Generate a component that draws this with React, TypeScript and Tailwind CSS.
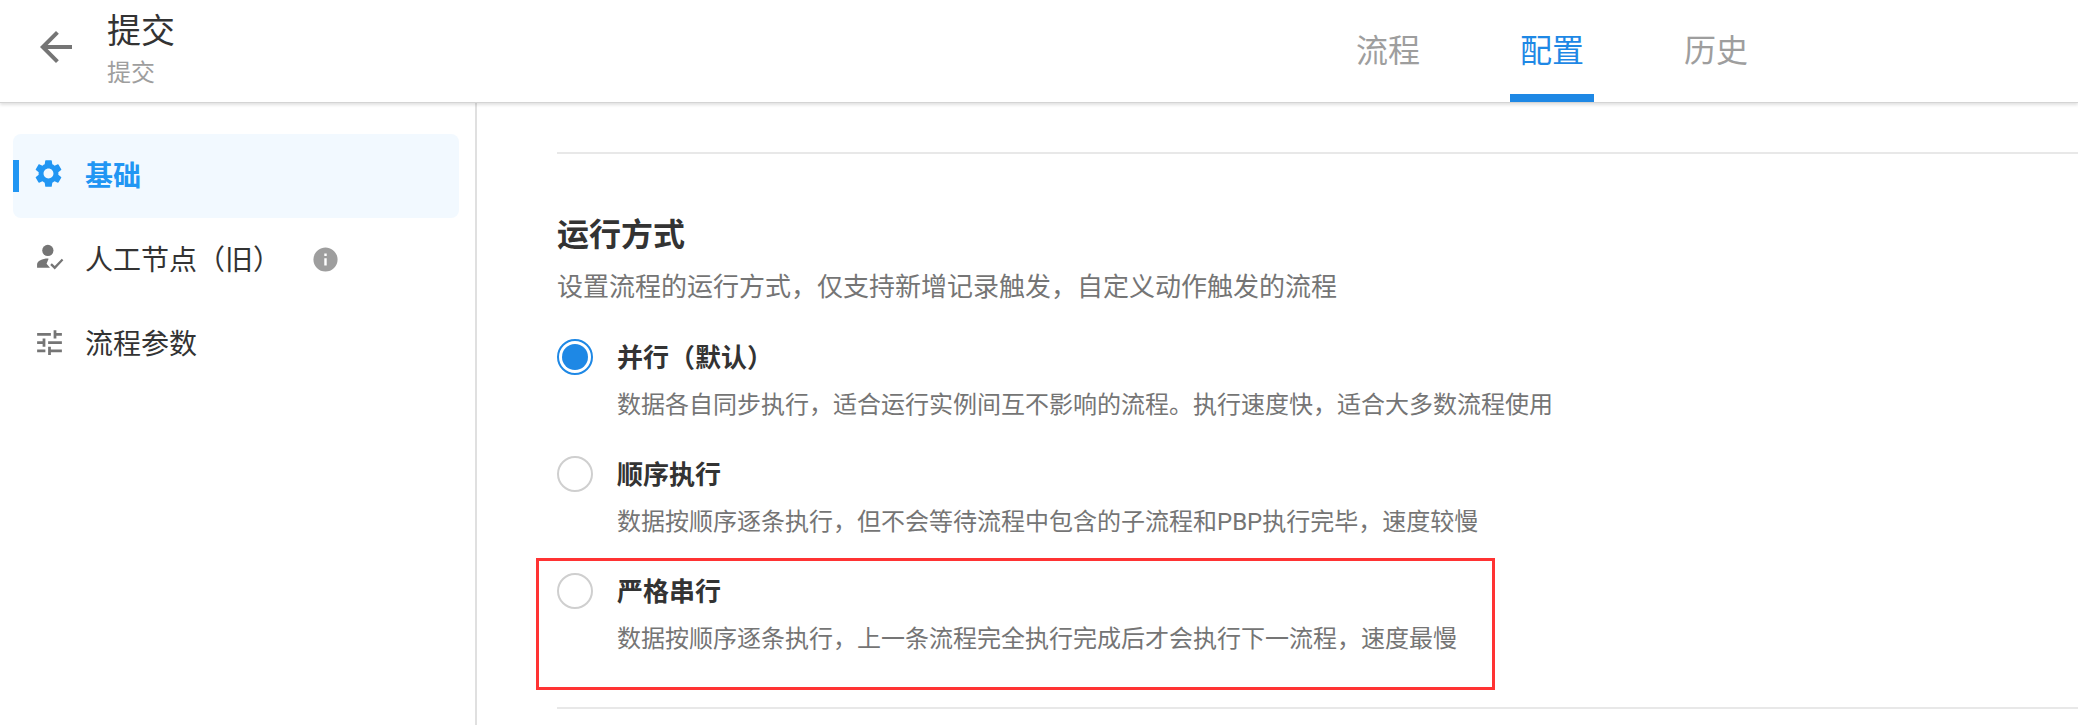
import React from 'react';
import { MdArrowBack, MdInfo, MdSettings, MdTune } from 'react-icons/md';

const font = "font-['Roboto','Noto_Sans_CJK_SC',sans-serif]";

const PersonCheck = () => (
  <svg viewBox="0 0 26 26" className="w-[28px] h-[28px]" fill="#757575">
    <circle cx="11" cy="6" r="5.2" />
    <path d="M11 13.5c-5 0-10 2.4-10 5.4V22h12l-3.2-3.6 1.9-4.8z" />
    <path d="M13.2 19.4l1.5-1.6 2.7 2.7 6.5-6.9 1.5 1.5-8 8.6z" />
  </svg>
);

const tabs = [
  { label: '流程', active: false },
  { label: '配置', active: true },
  { label: '历史', active: false },
];

const options = [
  { title: '并行（默认）', desc: '数据各自同步执行，适合运行实例间互不影响的流程。执行速度快，适合大多数流程使用', checked: true },
  { title: '顺序执行', desc: '数据按顺序逐条执行，但不会等待流程中包含的子流程和PBP执行完毕，速度较慢', checked: false },
  { title: '严格串行', desc: '数据按顺序逐条执行，上一条流程完全执行完成后才会执行下一流程，速度最慢', checked: false, marked: true },
];

const App: React.FC = () => {
  return (
    <div className={`${font} h-[725px] w-[2078px] overflow-hidden bg-white flex flex-col`}>
      <header className="h-[103px] shrink-0 flex border-b border-[#d4d4d4] shadow-[0_2px_3px_rgba(0,0,0,0.12)] relative z-10 bg-white">
        <div className="w-[107px] flex items-center pl-[32px] pb-[9px]">
          <MdArrowBack size={48} color="#757575" />
        </div>
        <div className="flex flex-col pt-[11px]">
          <span className="text-[34px] leading-[40px] text-[#333]">提交</span>
          <span className="text-[24px] leading-[34px] mt-[5px] text-[#9e9e9e]">提交</span>
        </div>
        <nav className="ml-auto mr-[320px] flex gap-20">
          {tabs.map(tab => (
            <div
              key={tab.label}
              className={`w-[84px] h-[102px] pt-[30px] text-center text-[32px] leading-[42px] border-b-[8px] ${tab.active ? 'text-[#1e88e5] border-[#1e88e5]' : 'text-[#9e9e9e] border-transparent'}`}
            >
              {tab.label}
            </div>
          ))}
        </nav>
      </header>

      <div className="flex flex-1 min-h-0">
        <aside className="w-[477px] shrink-0 border-r-2 border-[#e0e0e0] pt-[31px] pl-[13px] pr-[16px]">
          <div className="relative h-[84px] flex items-center rounded-lg bg-[#f2f9ff] text-[#2196f3] font-bold text-[28px]">
            <span className="absolute left-0 top-[26px] w-[6px] h-[32px] bg-[#2196f3]" />
            <span className="w-[72px] pl-[19px] pb-[6px]"><MdSettings size={33} color="#2196f3" /></span>
            <span className="pt-[2px]">基础</span>
          </div>
          <div className="h-[84px] flex items-center text-[#333] text-[28px]">
            <span className="w-[72px] pl-[23px] pb-[4px]"><PersonCheck /></span>
            <span className="pt-[2px]">人工节点（旧）</span>
            <span className="ml-[30px] pb-[2px]"><MdInfo size={29} color="#9e9e9e" /></span>
          </div>
          <div className="h-[84px] flex items-center text-[#333] text-[28px]">
            <span className="w-[72px] pl-[20px] pb-[4px]"><MdTune size={33} color="#757575" /></span>
            <span className="pt-[2px]">流程参数</span>
          </div>
        </aside>

        <main className="flex-1 pl-[80px] pt-[49px]">
          <div className="h-[2px] bg-[#e8e8e8]" />
          <h2 className="mt-[59px] text-[32px] leading-[44px] font-bold text-[#333]">运行方式</h2>
          <p className="mt-[12px] text-[26px] leading-[36px] text-[#757575]">设置流程的运行方式，仅支持新增记录触发，自定义动作触发的流程</p>

          <div className="mt-[34px] flex flex-col gap-[33px]">
            {options.map(opt => (
              <div key={opt.title} className="relative flex gap-[24px]">
                {opt.checked ? (
                  <span className="w-[36px] h-[36px] shrink-0 rounded-full border-2 border-[#1e88e5] flex items-center justify-center">
                    <span className="w-[26px] h-[26px] rounded-full bg-[#1e88e5]" />
                  </span>
                ) : (
                  <span className="w-[36px] h-[36px] shrink-0 rounded-full border-2 border-[#cfcfcf]" />
                )}
                <div>
                  <div className="pt-[1px] text-[26px] leading-[36px] font-bold text-[#333]">{opt.title}</div>
                  <div className="mt-[11px] text-[24px] leading-[36px] text-[#757575]">{opt.desc}</div>
                </div>
                {opt.marked && (
                  <span className="absolute left-[-21px] top-[-15px] w-[959px] h-[132px] border-[3px] border-[#f33]" />
                )}
              </div>
            ))}
          </div>

          <div className="mt-[50px] h-[2px] bg-[#e8e8e8]" />
        </main>
      </div>
    </div>
  );
};

export default App;
